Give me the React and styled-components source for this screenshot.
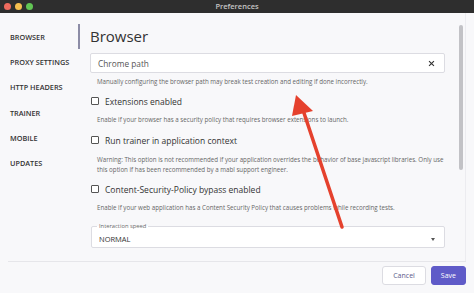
import React from "react";
import styled, { createGlobalStyle } from "styled-components";

const GlobalStyle = createGlobalStyle`
  html, body { margin: 0; padding: 0; }
  body {
    font-family: "Open Sans", "Noto Sans", sans-serif;
    background: #f8f8fa;
    color: #333;
  }
`;

const Window = styled.div`
  position: relative;
  width: 474px;
  height: 293px;
  display: flex;
  flex-direction: column;
  background: #f8f8fa;
  overflow: hidden;
`;

const TitleBar = styled.div`
  height: 13px;
  flex: none;
  background: #2e2e2e;
  display: flex;
  align-items: center;
  position: relative;
  padding-left: 4px;
  gap: 4px;
`;

const Light = styled.span`
  width: 7px;
  height: 7px;
  border-radius: 50%;
  background: ${(p) => p.color};
`;

const TitleText = styled.div`
  position: absolute;
  left: 0;
  right: 0;
  text-align: center;
  font-size: 7.5px;
  font-weight: 600;
  color: #c4c4c4;
  line-height: 13px;
`;

const Main = styled.div`
  flex: 1;
  display: flex;
  min-height: 0;
`;

const Sidebar = styled.nav`
  width: 80px;
  flex: none;
  padding-top: 11px;
  display: flex;
  flex-direction: column;
`;

const NavItem = styled.div`
  height: 25.3px;
  display: flex;
  align-items: center;
  padding-left: 10px;
  font-size: 7.3px;
  font-weight: 600;
  color: #333;
  box-sizing: border-box;
  white-space: nowrap;
  border-right: 2px solid ${(p) => (p.active ? "#8c8ca6" : "transparent")};
`;

const Content = styled.section`
  flex: 1;
  position: relative;
  padding: 13px 20px 0 10px;
  border-right: 1px solid #ececf0;
  margin-right: 8px;
  display: flex;
  flex-direction: column;
`;

const Scrollbar = styled.div`
  position: absolute;
  right: 2px;
  top: 12px;
  width: 4px;
  height: 145px;
  border-radius: 2px;
  background: #c2c2c6;
`;

const Heading = styled.h1`
  margin: 0;
  font-size: 15px;
  font-weight: 400;
  color: #333;
  line-height: 20px;
  height: 20px;
`;

const TextField = styled.div`
  margin-top: 7px;
  height: 20px;
  background: #fff;
  border: 1px solid #dcdce2;
  border-radius: 2px;
  display: flex;
  align-items: center;
  justify-content: space-between;
  padding: 0 9px 0 7px;
  box-sizing: border-box;
  font-size: 8.3px;
  color: #555;
`;

const Helper = styled.p`
  margin: 0;
  padding-left: 7px;
  font-size: 6.2px;
  line-height: 10px;
  color: #666;
  margin-top: ${(p) => p.top || 0}px;
`;

const CheckRow = styled.label`
  display: flex;
  align-items: center;
  gap: 6px;
  height: 12px;
  padding-left: 1px;
  font-size: 8.5px;
  color: #333;
  margin-top: ${(p) => p.top}px;
`;

const Box = styled.span`
  width: 6px;
  height: 6px;
  border: 1px solid #555;
  border-radius: 1px;
  background: #fff;
`;

const Select = styled.div`
  position: relative;
  margin: 13px 0 0 1px;
  padding: 4px 9px 0 7px;
  height: 22px;
  box-sizing: border-box;
  border: 1px solid #dcdce2;
  border-radius: 2px;
  background: #fff;
  display: flex;
  align-items: center;
  justify-content: space-between;
`;

const Legend = styled.span`
  position: absolute;
  left: 5px;
  top: -4px;
  font-size: 5.8px;
  color: #666;
  padding: 0 2px;
  line-height: 7px;
  background: linear-gradient(#f8f8fa 50%, #fff 50%);
`;

const SelectValue = styled.span`
  font-size: 7.5px;
  color: #333;
`;

const Caret = styled.span`
  width: 0;
  height: 0;
  border-left: 2.5px solid transparent;
  border-right: 2.5px solid transparent;
  border-top: 3px solid #555;
`;

const Footer = styled.footer`
  flex: none;
  height: 32px;
  margin: 0 8px 0 8px;
  border-top: 1px solid #e6e6ea;
  display: flex;
  justify-content: flex-end;
  align-items: flex-start;
  gap: 5px;
  padding-top: 4px;
  box-sizing: border-box;
`;

const Button = styled.button`
  height: 19px;
  padding: 0 ${(p) => (p.primary ? 9 : 10)}px;
  font-family: inherit;
  font-size: 7px;
  border-radius: 3px;
  border: 1px solid ${(p) => (p.primary ? "#5f5bc8" : "#dcdce2")};
  background: ${(p) => (p.primary ? "#5f5bc8" : "#fff")};
  color: ${(p) => (p.primary ? "#fff" : "#5a5a8a")};
`;

const Arrow = styled.svg`
  position: absolute;
  left: 0;
  top: 0;
  pointer-events: none;
`;

function ClearIcon() {
  return (
    <svg width="7" height="7" viewBox="0 0 10 10">
      <path d="M1.5 1.5 L8.5 8.5 M8.5 1.5 L1.5 8.5" stroke="#333" strokeWidth="1.6" />
    </svg>
  );
}

export default function App() {
  const nav = ["BROWSER", "PROXY SETTINGS", "HTTP HEADERS", "TRAINER", "MOBILE", "UPDATES"];
  return (
    <Window>
      <GlobalStyle />
      <TitleBar>
        <Light color="#ed6a5e" />
        <Light color="#f5bf4f" />
        <Light color="#61c554" />
        <TitleText>Preferences</TitleText>
      </TitleBar>
      <Main>
        <Sidebar>
          {nav.map((n, i) => (
            <NavItem key={n} active={i === 0}>{n}</NavItem>
          ))}
        </Sidebar>
        <Content>
          <Scrollbar />
          <Heading>Browser</Heading>
          <TextField>
            <span>Chrome path</span>
            <ClearIcon />
          </TextField>
          <Helper top={4}>
            Manually configuring the browser path may break test creation and editing if done incorrectly.
          </Helper>
          <CheckRow top={8}>
            <Box />Extensions enabled
          </CheckRow>
          <Helper top={8}>
            Enable if your browser has a security policy that requires browser extensions to launch.
          </Helper>
          <CheckRow top={9}>
            <Box />Run trainer in application context
          </CheckRow>
          <Helper top={9}>
            Warning: This option is not recommended if your application overrides the behavior of base javascript libraries. Only use this option if has been recommended by a mabl support engineer.
          </Helper>
          <CheckRow top={8}>
            <Box />Content-Security-Policy bypass enabled
          </CheckRow>
          <Helper top={8}>
            Enable if your web application has a Content Security Policy that causes problems while recording tests.
          </Helper>
          <Select>
            <Legend>Interaction speed</Legend>
            <SelectValue>NORMAL</SelectValue>
            <Caret />
          </Select>
        </Content>
      </Main>
      <Footer>
        <Button>Cancel</Button>
        <Button primary>Save</Button>
      </Footer>
      <Arrow width="474" height="293" viewBox="0 0 474 293">
        <line x1="342" y1="227" x2="303" y2="110" stroke="#e5412d" strokeWidth="3.5" strokeLinecap="round" />
        <polygon points="296,95 313,111 292,116" fill="#e5412d" />
      </Arrow>
    </Window>
  );
}
